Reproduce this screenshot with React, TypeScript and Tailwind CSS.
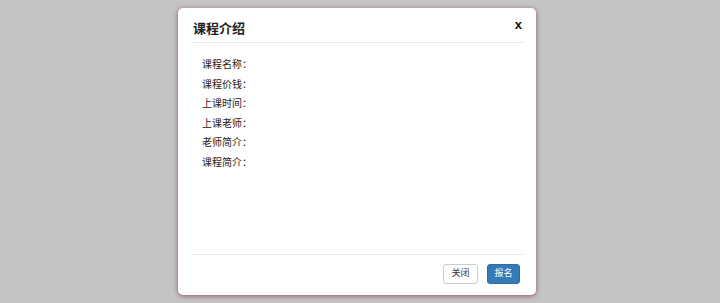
/**
 * CourseModal - Course introduction dialog
 */

const fields = ['课程名称：', '课程价钱：', '上课时间：', '上课老师：', '老师简介：', '课程简介：'];

export default function App() {
  return (
    <div
      className="h-[303px] w-full bg-[#c4c4c4] flex justify-center pr-[6px]"
      style={{ fontFamily: '"Liberation Sans", "Noto Sans CJK SC", sans-serif' }}
    >
      <div className="mt-[8px] w-[358px] h-[287px] bg-white rounded-[5px] flex flex-col shadow-[0_1px_5px_rgba(120,50,55,0.75)]">
        <div className="h-[35px] ml-[15px] mr-[12px] flex items-center justify-between border-b border-[#e8e8e8]">
          <h4 className="text-[13px] font-bold text-[#222] leading-none pt-[6px]">课程介绍</h4>
          <button className="text-[13px] font-bold text-[#111] leading-none mr-[2px] pb-[1px]">x</button>
        </div>

        <div className="flex-1 pl-[24px] pt-[12px] text-[10px] text-[#222]">
          {fields.map((f) => (
            <div key={f} className="h-[19.6px] leading-[19.6px]">
              {f}
            </div>
          ))}
        </div>

        <div className="h-[41px] ml-[14px] mr-[12px] border-t border-[#e8e8e8] flex items-start justify-end gap-[9px] pt-[9px] pr-[4px]">
          <button className="w-[35px] h-[20px] text-[9px] text-[#333] bg-white border border-[#ccc] rounded-[3px]">
            关闭
          </button>
          <button className="w-[33px] h-[20px] text-[9px] text-white bg-[#337ab7] border border-[#2e6da4] rounded-[3px]">
            报名
          </button>
        </div>
      </div>
    </div>
  );
}
